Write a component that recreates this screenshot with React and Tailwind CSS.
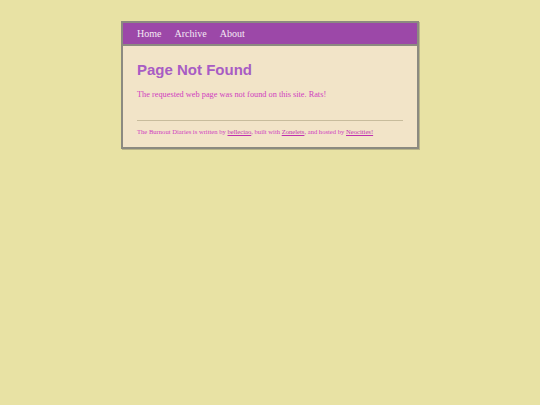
import React from "react";

const serif = { fontFamily: '"Liberation Serif", "DejaVu Serif", serif' };

export default function App() {
  return (
    <div className="min-h-[405px] w-full bg-[#e8e2a4] pt-[21px]">
      <div className="mx-auto w-[298px] border-2 border-[#8c8a80] bg-[#f2e4c8] shadow-[1px_1px_0_#b8b488]">
        <nav
          className="flex h-[23px] items-center gap-[13px] border-b-2 border-[#8c8a80] bg-[#9c48a8] px-[14px] pb-[1px] text-[10px] text-[#f4e8f4]"
          style={serif}
        >
          <a>Home</a>
          <a>Archive</a>
          <a>About</a>
        </nav>
        <main className="px-[14px] pb-[10px] pt-[14px]">
          <h1
            className="text-[15px] font-bold leading-[20px] text-[#a85cc4]"
            style={{ fontFamily: '"Liberation Sans", Arial, sans-serif' }}
          >
            Page Not Found
          </h1>
          <p className="mt-[9px] text-[8.3px] leading-[12px] text-[#d040c0]" style={serif}>
            The requested web page was not found on this site. Rats!
          </p>
          <hr className="mt-[19px] border-t border-[#c8bc9c]" />
          <p className="mt-[6px] text-[6.6px] leading-[10px] text-[#d040c0]" style={serif}>
            The Burnout Diaries is written by <a className="text-[#c030b0] underline decoration-[#c030b0]">belleciao</a>, built with{" "}
            <a className="text-[#c030b0] underline decoration-[#c030b0]">Zonelets</a>, and hosted by{" "}
            <a className="text-[#c030b0] underline decoration-[#c030b0]">Neocities!</a>
          </p>
        </main>
      </div>
    </div>
  );
}
